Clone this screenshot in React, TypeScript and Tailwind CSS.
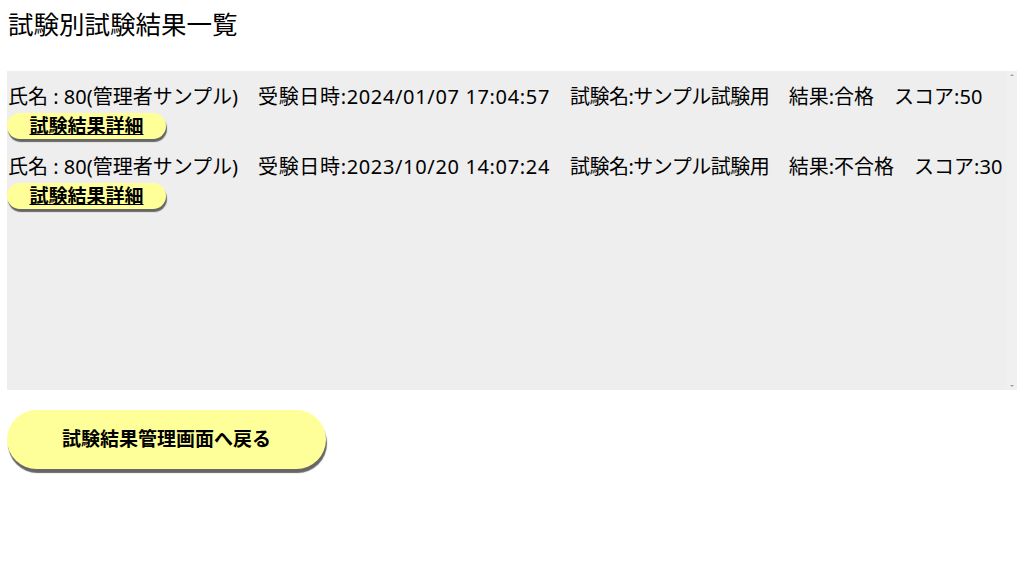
import React from "react";

const rows = [
  { date: "2024/01/07 17:04:57", result: "合格", score: "50" },
  { date: "2023/10/20 14:07:24", result: "不合格", score: "30" },
];

export default function App() {
  return (
    <div
      className="w-[1024px] h-[576px] bg-white text-black px-[7px] pt-[8px]"
      style={{ fontFamily: '"Noto Sans", "Noto Sans CJK JP", sans-serif' }}
    >
      <h1 className="text-[25.5px] leading-[32px] font-normal pl-[1px]">試験別試験結果一覧</h1>
      <div className="mt-[31px] w-[1010px] h-[319px] bg-[#eeeeee] flex">
        <div className="flex-1 pt-[13px] pl-[1px]">
          {rows.map((r, i) => (
            <div key={i} className="h-[70px]">
              <div className="text-[20px] leading-[26px] whitespace-pre">
                <span>{"氏名 : 80(管理者サンプル)　"}</span>
                <span className="tracking-[0.65px]">{`受験日時:${r.date}`}</span>
                <span>{"　"}</span>
                <span className="tracking-[-0.5px]">{"試験名:サンプル試験用　"}</span>
                <span>{`結果:${r.result}　スコア:${r.score}`}</span>
              </div>
              <button className="mt-[3px] -ml-[1px] w-[159px] h-[26px] rounded-full bg-[#ffff99] shadow-[1px_3px_1px_#666] text-[19px] leading-[26px] font-bold underline flex items-center justify-center">
                試験結果詳細
              </button>
            </div>
          ))}
        </div>
        <div className="w-[10px] bg-[#f0f0f0] flex flex-col items-center justify-between py-[3px]">
          <div className="w-0 h-0 border-l-[2px] border-r-[2px] border-b-[2px] border-l-transparent border-r-transparent border-b-[#a0a0a0]" />
          <div className="w-0 h-0 border-l-[2px] border-r-[2px] border-t-[2px] border-l-transparent border-r-transparent border-t-[#a0a0a0]" />
        </div>
      </div>
      <button className="mt-[20px] w-[319px] h-[59px] rounded-full bg-[#ffff99] shadow-[1px_4px_1px_#666] text-[19px] font-bold flex items-center justify-center">
        試験結果管理画面へ戻る
      </button>
    </div>
  );
}
